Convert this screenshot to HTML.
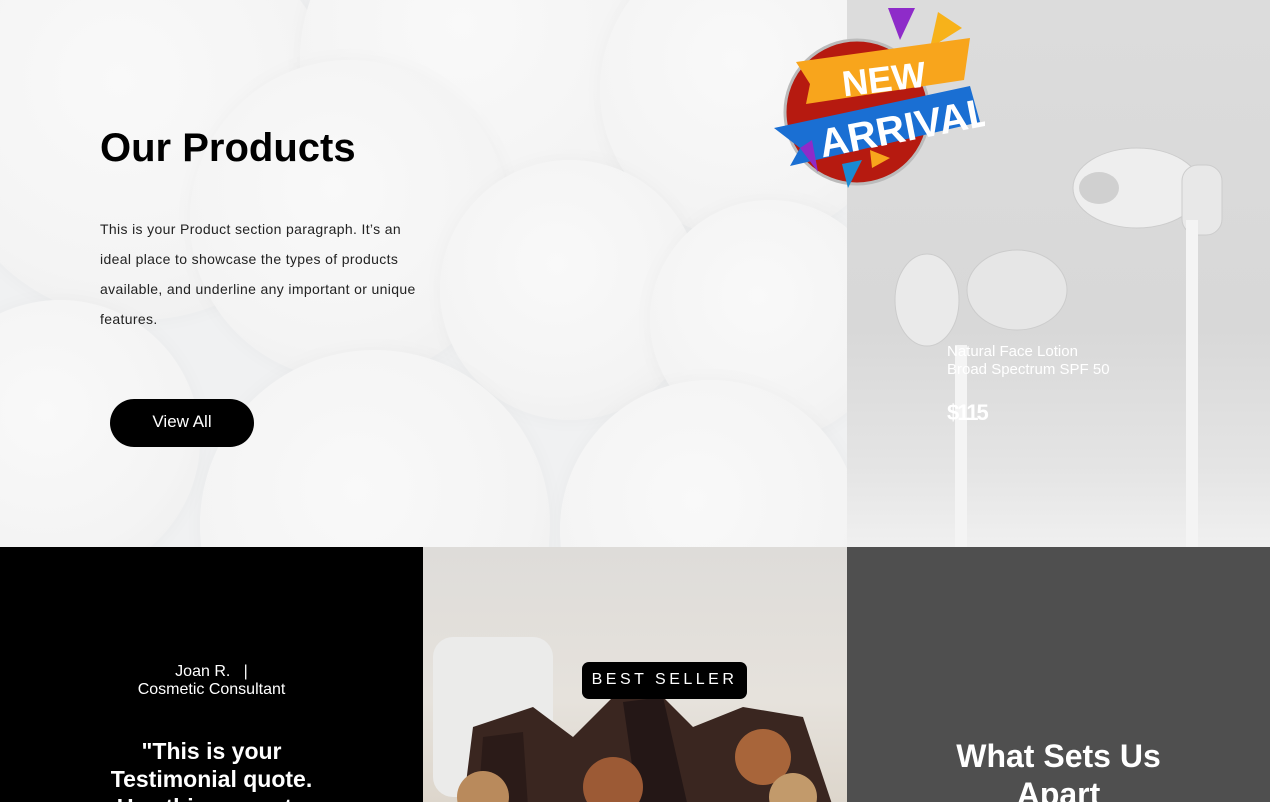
<!DOCTYPE html>
<html><head><meta charset="utf-8"><style>
*{margin:0;padding:0;box-sizing:border-box}
body{width:1270px;height:802px;overflow:hidden;font-family:"Liberation Sans",Arial,sans-serif;position:relative;background:#fff}
.abs{position:absolute}
#left{left:0;top:0;width:847px;height:547px;background:#f0f1f2;overflow:hidden}
.sph{position:absolute;border-radius:50%;background:radial-gradient(circle at 45% 40%,#f9f9f9 0%,#f4f4f4 60%,#ececec 100%);box-shadow:0 0 20px rgba(0,0,0,.03)}
#right{left:847px;top:0;width:423px;height:547px;background:linear-gradient(180deg,#dcdcdc 0%,#d8d8d8 60%,#e4e4e4 85%,#f0f0f0 100%);overflow:hidden}
</style></head><body>
<div id="left" class="abs">
 <div class="sph" style="left:-60px;top:-80px;width:400px;height:400px"></div>
 <div class="sph" style="left:300px;top:-120px;width:360px;height:360px"></div>
 <div class="sph" style="left:600px;top:-60px;width:300px;height:300px"></div>
 <div class="sph" style="left:190px;top:60px;width:320px;height:320px"></div>
 <div class="sph" style="left:440px;top:160px;width:260px;height:260px"></div>
 <div class="sph" style="left:650px;top:200px;width:240px;height:240px"></div>
 <div class="sph" style="left:200px;top:350px;width:350px;height:350px"></div>
 <div class="sph" style="left:-80px;top:300px;width:280px;height:280px"></div>
 <div class="sph" style="left:560px;top:380px;width:300px;height:300px"></div>
 <div class="abs" style="left:100px;top:126px;font-size:40px;font-weight:bold;color:#000">Our Products</div>
 <div class="abs" style="left:100px;top:214px;width:330px;font-size:14px;letter-spacing:0.35px;line-height:30px;color:#222">This is your Product section paragraph. It’s an ideal place to showcase the types of products available, and underline any important or unique features.</div>
 <div class="abs" style="left:110px;top:399px;width:144px;height:48px;border-radius:24px;background:#000;color:#fff;font-size:17px;text-align:center;line-height:46px">View All</div>
</div>
<div id="right" class="abs">
 <svg class="abs" style="left:0;top:0" width="423" height="547">
  <ellipse cx="290" cy="188" rx="64" ry="40" fill="#eee" stroke="#ccc"/>
  <ellipse cx="252" cy="188" rx="20" ry="16" fill="#d0d0d0"/>
  <rect x="335" y="165" width="40" height="70" rx="16" fill="#e8e8e8" stroke="#ccc"/>
  <rect x="339" y="220" width="12" height="327" fill="#f4f4f4"/>
  <ellipse cx="170" cy="290" rx="50" ry="40" fill="#e6e6e6" stroke="#ccc"/>
  <ellipse cx="80" cy="300" rx="32" ry="46" fill="#eaeaea" stroke="#ccc"/>
  <rect x="108" y="345" width="12" height="202" fill="#f4f4f4"/>
 </svg>
 <div class="abs" style="left:100px;top:343px;color:#fff;font-size:15px;line-height:18px">Natural Face Lotion<br>Broad Spectrum SPF 50</div>
 <div class="abs" style="left:100px;top:400px;color:#fff;font-size:22px;font-weight:bold;letter-spacing:-2px">$115</div>
</div>
<svg class="abs" style="left:770px;top:0" width="215" height="190">
 <circle cx="87" cy="112" r="72" fill="#b61a10" stroke="#bbb" stroke-width="3"/>
 <polygon points="118,8 145,8 130,40" fill="#8e2bc9"/>
 <polygon points="168,12 192,28 160,48" fill="#f7b21a"/>
 <polygon points="26,62 200,38 194,80 36,104 40,84" fill="#f8a51c"/>
 <polygon points="4,128 200,86 210,122 20,166 30,148" fill="#1a6fd3"/>
 <polygon points="30,148 48,172 42,140" fill="#8e2bc9"/>
 <polygon points="72,164 78,188 92,160" fill="#1a8ad3"/>
 <polygon points="100,150 120,158 102,168" fill="#f8a51c"/>
 <text x="72" y="92" font-family="Liberation Sans" font-weight="bold" font-size="36" fill="#fff" transform="rotate(-7 110 80)">NEW</text>
 <text x="48" y="146" font-family="Liberation Sans" font-weight="bold" font-size="40" fill="#fff" transform="rotate(-11 110 130)">ARRIVAL</text>
</svg>
<div class="abs" style="left:0;top:547px;width:423px;height:255px;background:#000;color:#fff;text-align:center;overflow:hidden">
 <div style="margin-top:116px;font-size:16px;line-height:18px">Joan R. &nbsp;&nbsp;|<br>Cosmetic Consultant</div>
 <div style="margin-top:38px;font-size:23px;font-weight:bold;line-height:28px">"This is your<br>Testimonial quote.<br>Use this space to</div>
</div>
<div class="abs" style="left:423px;top:547px;width:424px;height:255px;background:linear-gradient(180deg,#dedcd9,#e6e2dc 60%,#ddd6cc);overflow:hidden">
 <div class="abs" style="left:10px;top:90px;width:120px;height:160px;border-radius:20px;background:#ebebea"></div>
 <svg class="abs" style="left:0;top:100px" width="424" height="155">
  <polygon points="40,160 50,80 110,60 150,90 200,40 240,50 270,80 320,60 380,70 410,160" fill="#3a2620"/>
  <polygon points="60,90 100,85 105,160 55,160" fill="#2b1b18"/>
  <polygon points="200,55 240,50 265,160 215,160" fill="#241716"/>
  <circle cx="190" cy="140" r="30" fill="#9c5a35"/>
  <circle cx="340" cy="110" r="28" fill="#a8653a"/>
  <circle cx="60" cy="150" r="26" fill="#b98a5c"/>
  <circle cx="370" cy="150" r="24" fill="#c29a6b"/>
 </svg>
 <div class="abs" style="left:159px;top:115px;width:165px;height:37px;background:#000;border-radius:7px;color:#fff;font-size:16px;letter-spacing:3.5px;text-align:center;line-height:36px">BEST SELLER</div>
</div>
<div class="abs" style="left:847px;top:547px;width:423px;height:255px;background:#4f4f4f;color:#fff;text-align:center;overflow:hidden">
 <div style="margin-top:190px;font-size:32px;font-weight:bold;line-height:38px">What Sets Us<br>Apart</div>
</div>
</body></html>
